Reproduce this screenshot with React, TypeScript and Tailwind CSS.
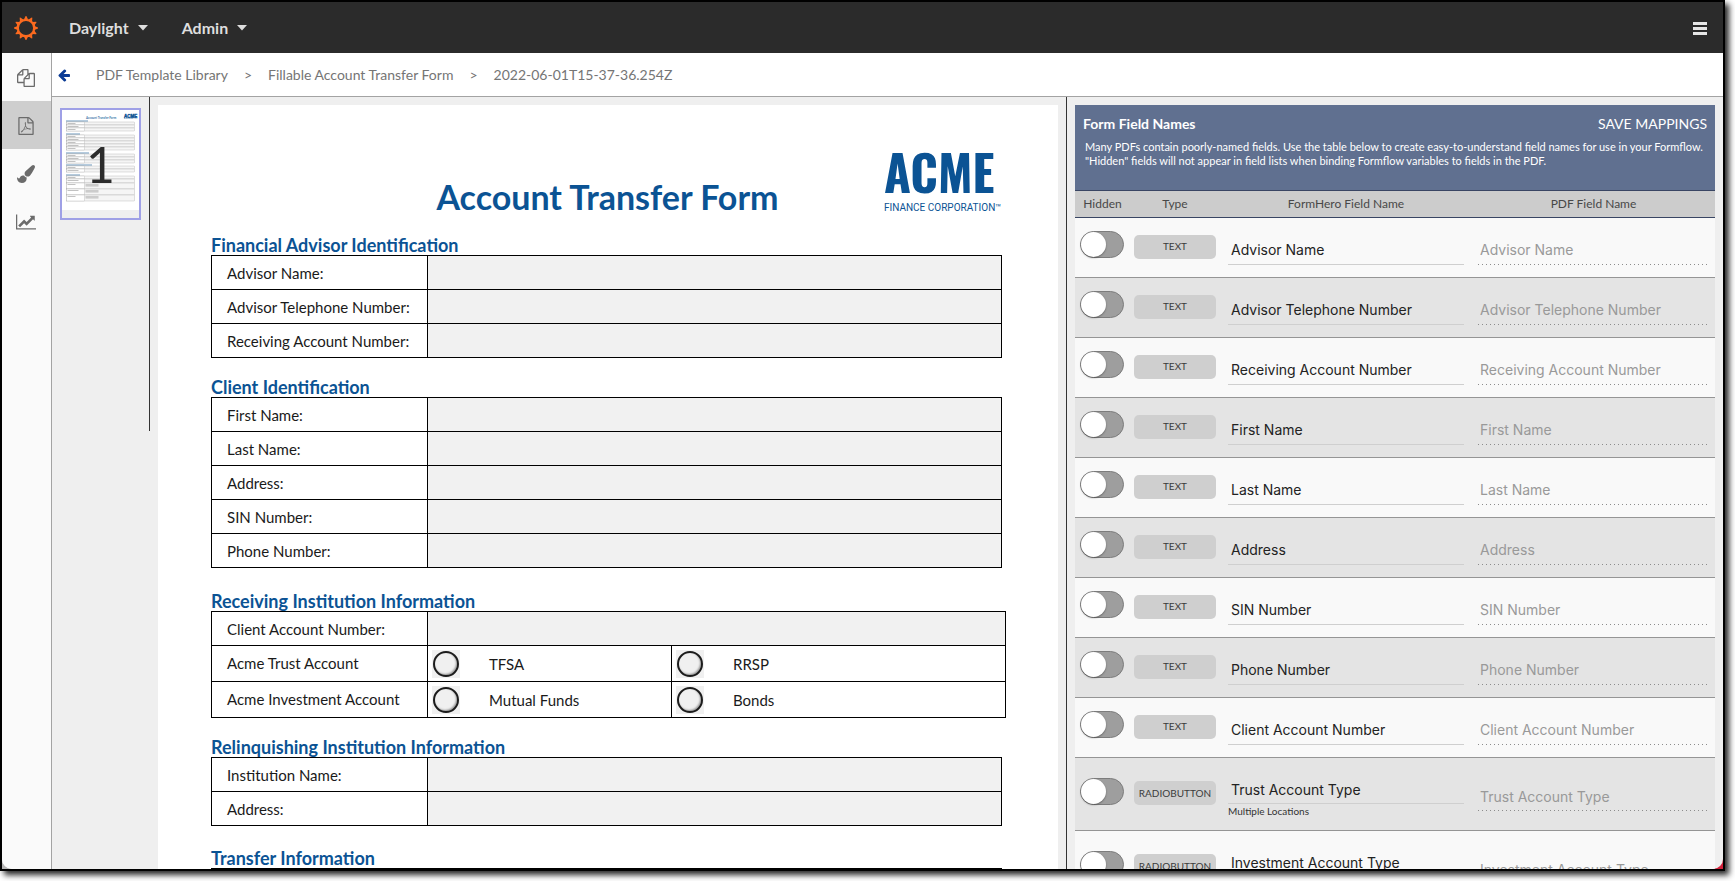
import { useState } from 'react';
import type { ReactNode } from 'react';

function Glyph({ d, viewBox = '0 0 1792 1792', className }: { d: string; viewBox?: string; className: string }) {
  return (
    <svg viewBox={viewBox} className={className} fill="currentColor" aria-hidden="true">
      <path d={d} />
    </svg>
  );
}

const FILES =
  'M1696 384q40 0 68 28t28 68v1216q0 40-28 68t-68 28h-960q-40 0-68-28t-28-68v-288h-544q-40 0-68-28t-28-68v-672q0-40 20-88t48-76l408-408q28-28 76-48t88-20h416q40 0 68 28t28 68v328q68-40 128-40h416zm-544 213l-299 299h299v-299zm-640-384l-299 299h299v-299zm196 647l316-316v-416h-384v416q0 40-28 68t-68 28h-416v640h512v-256q0-40 20-88t48-76zm956 804v-1152h-384v416q0 40-28 68t-68 28h-416v640h896z';
const PDF =
  'M1596 380q28 28 48 76t20 88v1152q0 40-28 68t-68 28h-1344q-40 0-68-28t-28-68v-1600q0-40 28-68t68-28h896q40 0 88 20t76 48zm-444-244v376h376q-10-29-22-41l-313-313q-12-12-41-22zm384 1528v-1024h-416q-40 0-68-28t-28-68v-416h-768v1536h1280zm-514-593q33 26 84 56 59-7 117-7 147 0 177 49 16 22 2 52 0 1-1 2l-2 2v1q-6 38-71 38-48 0-115-20t-130-53q-221 24-392 83-153 262-242 262-15 0-28-7l-24-12q-1-1-6-5-10-10-6-36 9-40 56-91.5t132-96.5q14-9 23 6 2 2 2 4 52-85 107-197 68-136 104-262-24-82-30.5-159.5t6.5-127.5q11-40 42-40h22q23 0 35 15 18 21 9 68-2 6-4 8 1 3 1 8v30q-2 123-14 192 55 164 146 238zm-576 411q52-24 137-158-51 40-87.5 84t-49.5 74zm398-920q-15 42-2 132 1-7 7-44 0-3 7-43 1-4 4-8-1-1-1-2-1-2-1-3-1-22-13-36 0 1-1 2v2zm-124 661q135-54 284-81-2-1-13-9.5t-16-13.5q-76-67-127-176-27 86-83 197-30 56-45 83zm646-16q-24-24-140-24 76 28 124 28 14 0 18-1 0-1-2-3z';
const BRUSH =
  'M1615 0q70 0 122.5 46.5t52.5 116.5q0 63-45 151-332 629-465 752-97 91-218 91-126 0-216.5-92.5t-90.5-219.5q0-128 92-212l638-579q59-54 130-54zm-909 1034q39 76 106.5 130t150.5 76l1 71q4 213-129.5 347t-348.5 134q-123 0-218-46.5t-152.5-127.5-86.5-183-29-220q7 5 41 30t62 44.5 59 36.5 46 17q41 0 55-37 25-66 57.5-112.5t69.5-76 88-47.5 103-25.5 125-10.5z';
const CHART =
  'M2048 1536v128h-2048v-1536h128v1408h1920zm-128-1248v435q0 21-19.5 29.5t-35.5-7.5l-121-121-633 633q-10 10-23 10t-23-10l-233-233-416 416-192-192 585-585q10-10 23-10t23 10l233 233 464-464-121-121q-16-16-7.5-35.5t29.5-19.5h435q14 0 23 9t9 23z';
const ARROW =
  'M1664 896v128q0 53-32.5 90.5t-84.5 37.5h-704l293 294q38 36 38 90t-38 90l-75 76q-37 37-90 37-52 0-91-37l-651-652q-37-37-37-90 0-52 37-91l651-650q38-38 91-38 52 0 90 38l75 74q38 38 38 91t-38 91l-293 293h704q52 0 84.5 37.5t32.5 90.5z';

function Sun() {
  const rays = Array.from({ length: 12 }, (_, i) => i * 30);
  return (
    <svg viewBox="0 0 24 24" className="size-6" aria-label="Home">
      <circle cx="12" cy="12" r="8.2" fill="none" stroke="#fb6a1f" strokeWidth="2.3" />
      {rays.map((a) => (
        <path key={a} d="M9.9 3.6 11.6 0h.8l1.7 3.6z" fill="#fb6a1f" transform={`rotate(${a} 12 12)`} />
      ))}
    </svg>
  );
}

function NavMenu({ label }: { label: string }) {
  return (
    <button className="flex items-center gap-[9px] text-[16px] leading-6 font-bold text-[#dedede]">
      {label}
      <svg viewBox="0 0 10 6" className="h-[6px] w-[10px]" fill="currentColor" aria-hidden="true">
        <path d="M0 0h10L5 5.5z" />
      </svg>
    </button>
  );
}

const tools = [
  { name: 'Forms', d: FILES, box: '0 0 1792 1792', size: 'size-[18px]' },
  { name: 'PDF templates', d: PDF, box: '0 0 1792 1792', size: 'size-[18px]' },
  { name: 'Themes', d: BRUSH, box: '0 0 1792 1792', size: 'size-[18px]' },
  { name: 'Reports', d: CHART, box: '0 0 2048 1792', size: 'h-[18px] w-5' },
];

function Sidebar() {
  return (
    <nav className="w-[50px] shrink-0 border-r border-[#a3a3a3] bg-[#fafafa]">
      {tools.map((t, i) => (
        <button
          key={t.name}
          aria-label={t.name}
          className={
            i === 1
              ? 'flex h-12 w-full items-center justify-center bg-[#cecece] pt-[2px] pr-[2px] text-[#6b6b6b]'
              : 'flex h-12 w-full items-center justify-center pt-[2px] pr-[2px] text-[#6b6b6b]'
          }
        >
          <Glyph d={t.d} viewBox={t.box} className={t.size} />
        </button>
      ))}
    </nav>
  );
}

function Thumbnail() {
  const groups = [
    { y: 11, rows: [3, 3, 3], w: 22 },
    { y: 24, rows: [3, 3, 3, 3, 3], w: 14 },
    { y: 43, rows: [3, 3, 3], w: 23 },
    { y: 55, rows: [3, 3], w: 26 },
    { y: 65, rows: [3, 4, 6, 6, 6], w: 14 },
  ];
  return (
    <button className="relative flex h-[112px] w-full items-start border-2 border-[#9fa0e6] bg-[#efefef]" aria-label="Page 1">
      <svg viewBox="0 0 77 100" className="block w-full bg-white" aria-hidden="true">
        <text x="24" y="9" fontSize="3" fontWeight="bold" fill="#3d76aa" fontFamily="Lato, sans-serif">
          Account Transfer Form
        </text>
        <text x="62" y="7.5" fontSize="4.5" fontWeight="bold" fill="#0b5394" stroke="#0b5394" strokeWidth="0.4" fontFamily="'Liberation Sans Narrow', sans-serif">
          ACME
        </text>
        <rect x="62" y="8.5" width="9" height="0.5" fill="#0b5394" opacity="0.5" />
        {groups.map((g) => {
          let y = g.y + 1;
          return (
            <g key={g.y}>
              <rect x="4" y={g.y - 0.6} width={g.w} height="1.2" fill="#0b5394" opacity="0.5" />
              {g.rows.map((h, i) => {
                const top = y;
                y += h;
                return (
                  <g key={i}>
                    <rect x="4.5" y={top} width="68" height={h} fill="#f5f5f5" stroke="#999" strokeWidth="0.3" />
                    <rect x="4.5" y={top} width="18" height={h} fill="#fff" stroke="#999" strokeWidth="0.3" />
                    <rect x="5.5" y={top + 1.2} width={8 + ((i * 3) % 6)} height="0.6" fill="#999" />
                    {h === 6 && <rect x="23.5" y={top + 1} width="13" height="2.6" fill="#ccc" />}
                  </g>
                );
              })}
            </g>
          );
        })}
      </svg>
      <span className="absolute inset-0 flex items-center justify-center text-[50px] leading-none text-[#2c2c2c]">1</span>
    </button>
  );
}

function Section({ title, children, gap }: { title: string; children: ReactNode; gap: string }) {
  return (
    <section className={gap}>
      <h2 className="pt-1 text-[18px] leading-5 font-bold text-[#0b5394]">{title}</h2>
      {children}
    </section>
  );
}

const labelCell = 'h-[34px] w-[216px] border border-black pl-[15px] text-left font-normal';

function FieldTable({ id, fields }: { id: string; fields: string[] }) {
  return (
    <div className="pr-1">
      <table className="w-full table-fixed border-collapse text-[15px] leading-5 text-[#1a1a1a]">
        <tbody>
          {fields.map((f) => (
            <tr key={f}>
              <th className={labelCell}>
                <label htmlFor={id + f}>{f}</label>
              </th>
              <td className="border border-black bg-[#f1f1f1] p-0">
                <input id={id + f} className="block h-[33px] w-full bg-transparent px-2 outline-none" />
              </td>
            </tr>
          ))}
        </tbody>
      </table>
    </div>
  );
}

function Radio({ name, label }: { name: string; label: string }) {
  return (
    <label className="flex items-center gap-[29px] pl-1">
      <span className="flex size-7 items-center justify-center bg-[#f0f0f0]">
        <input
          type="radio"
          name={name}
          className="size-[26px] appearance-none rounded-full border-2 border-[#1c1c1c] bg-[#f0f0f0] shadow-[inset_-1px_-1px_2px_#999]"
        />
      </span>
      {label}
    </label>
  );
}

function PdfPage() {
  return (
    <article className="h-full overflow-hidden bg-white pr-[52px] pl-[53px] text-[#1a1a1a]">
      <header className="flex h-[126px] items-start justify-between pr-1">
        <span className="w-[120px]" />
        <h1 className="pt-[72px] text-[34px] leading-10 font-bold text-[#0b5394]">Account Transfer Form</h1>
        <div className="w-[118px] pt-[39px] text-[#0b5394]">
          <div className="font-['Liberation_Sans_Narrow',Oswald,'Liberation_Sans',sans-serif] text-[49px] leading-[54px] font-bold">
            ACME
          </div>
          <div className="pt-[2px] font-[Roboto,sans-serif] text-[10px] leading-4 whitespace-nowrap">FINANCE CORPORATION™</div>
        </div>
      </header>
      <Section title="Financial Advisor Identification" gap="">
        <FieldTable id="advisor" fields={['Advisor Name:', 'Advisor Telephone Number:', 'Receiving Account Number:']} />
      </Section>
      <Section title="Client Identification" gap="mt-[15px]">
        <FieldTable id="client" fields={['First Name:', 'Last Name:', 'Address:', 'SIN Number:', 'Phone Number:']} />
      </Section>
      <Section title="Receiving Institution Information" gap="mt-[19px]">
        <table className="w-full table-fixed border-collapse text-[15px] leading-5">
          <colgroup>
            <col className="w-[216px]" />
            <col className="w-[244px]" />
            <col />
          </colgroup>
          <tbody>
            <tr>
              <th className={labelCell}>
                <label htmlFor="clientAccount">Client Account Number:</label>
              </th>
              <td colSpan={2} className="border border-black bg-[#f1f1f1] p-0">
                <input id="clientAccount" className="block h-[33px] w-full bg-transparent px-2 outline-none" />
              </td>
            </tr>
            {[
              ['Acme Trust Account', 'TFSA', 'RRSP'],
              ['Acme Investment Account', 'Mutual Funds', 'Bonds'],
            ].map(([head, a, b]) => (
              <tr key={head}>
                <th className="h-9 border border-black pb-[2px] pl-[15px] text-left font-normal">{head}</th>
                <td className="border border-black p-0 pt-px">
                  <Radio name={head} label={a} />
                </td>
                <td className="border border-black p-0 pt-px">
                  <Radio name={head} label={b} />
                </td>
              </tr>
            ))}
          </tbody>
        </table>
      </Section>
      <Section title="Relinquishing Institution Information" gap="mt-[15px]">
        <FieldTable id="relinquishing" fields={['Institution Name:', 'Address:']} />
      </Section>
      <Section title="Transfer Information" gap="mt-[18px]">
        <FieldTable id="transfer" fields={['']} />
      </Section>
    </article>
  );
}

type Field = { name: string; type: string; note?: string };

const fields: Field[] = [
  { name: 'Advisor Name', type: 'TEXT' },
  { name: 'Advisor Telephone Number', type: 'TEXT' },
  { name: 'Receiving Account Number', type: 'TEXT' },
  { name: 'First Name', type: 'TEXT' },
  { name: 'Last Name', type: 'TEXT' },
  { name: 'Address', type: 'TEXT' },
  { name: 'SIN Number', type: 'TEXT' },
  { name: 'Phone Number', type: 'TEXT' },
  { name: 'Client Account Number', type: 'TEXT' },
  { name: 'Trust Account Type', type: 'RADIOBUTTON', note: 'Multiple Locations' },
  { name: 'Investment Account Type', type: 'RADIOBUTTON', note: 'Multiple Locations' },
];

function Toggle({ label }: { label: string }) {
  return (
    <label className="block pb-[6px] pl-[5px]">
      <input type="checkbox" aria-label={label} className="peer sr-only" />
      <span className="flex h-[27px] w-11 items-center rounded-full border border-[#7c7c7c] bg-[#9e9e9e] peer-checked:justify-end peer-checked:bg-[#5f7090]">
        <span className="size-[25px] rounded-full bg-white shadow-[0_1px_2px_rgba(0,0,0,0.35)]" />
      </span>
    </label>
  );
}

function FieldRow({ field }: { field: Field }) {
  const [name, setName] = useState(field.name);
  return (
    <tr
      className={
        field.note
          ? 'h-[73px] border-b border-[#959595] odd:bg-[#f9f9f9] even:bg-[#e4e4e4]'
          : 'h-[60px] border-b border-[#959595] odd:bg-[#f9f9f9] even:bg-[#e4e4e4]'
      }
    >
      <td className="p-0">
        <Toggle label={'Hide ' + field.name} />
      </td>
      <td className="p-0 pb-[2px] pl-1">
        <span className="flex h-6 w-[82px] items-center justify-center rounded-[5px] bg-[#cfcfcf] text-[10px] text-[#3c3c3c]">
          {field.type}
        </span>
      </td>
      <td className="px-2 py-0">
        <input
          aria-label="FormHero Field Name"
          value={name}
          onChange={(e) => setName(e.target.value)}
          className="block h-[34px] w-full border-b border-[#cfcfcf] bg-transparent pt-[5px] pl-[3px] font-[Inter,sans-serif] text-[14px] text-[#222] outline-none"
        />
        {field.note && <div className="text-[10px] leading-[14px] text-[#333]">{field.note}</div>}
      </td>
      <td className="py-0 pr-2 pl-[6px]">
        <input
          aria-label="PDF Field Name"
          readOnly
          value={field.name}
          className="block h-[34px] w-full bg-[repeating-linear-gradient(90deg,#8c8c8c_0_1px,transparent_1px_4px)] bg-[length:100%_1px] bg-bottom bg-no-repeat pt-1 pl-[2px] font-[Inter,sans-serif] text-[14px] text-[#999] outline-none"
        />
      </td>
    </tr>
  );
}

function MappingPanel() {
  return (
    <section className="h-full overflow-hidden">
      <header className="h-[85px] bg-[#607090] px-2 pt-[9px] text-white">
        <div className="flex items-center justify-between leading-5">
          <h2 className="text-[14px] font-bold">Form Field Names</h2>
          <button className="text-[14px]">SAVE MAPPINGS</button>
        </div>
        <p className="pt-[6px] pl-[2px] text-[11px] leading-[14px]">
          Many PDFs contain poorly-named fields. Use the table below to create easy-to-understand field names for use in your Formflow.
          <br />
          "Hidden" fields will not appear in field lists when binding Formflow variables to fields in the PDF.
        </p>
      </header>
      <table className="w-full table-fixed border-collapse">
        <colgroup>
          <col className="w-[55px]" />
          <col className="w-[90px]" />
          <col className="w-[252px]" />
          <col />
        </colgroup>
        <thead>
          <tr className="h-[27px] border-y border-[#394563] bg-[#cccccc] text-[12px] text-[#484848]">
            <th className="p-0 pb-px font-normal">Hidden</th>
            <th className="p-0 pb-px font-normal">Type</th>
            <th className="p-0 pb-px font-normal">FormHero Field Name</th>
            <th className="p-0 pb-px font-normal">PDF Field Name</th>
          </tr>
        </thead>
        <tbody>
          {fields.map((f) => (
            <FieldRow key={f.name} field={f} />
          ))}
        </tbody>
      </table>
    </section>
  );
}

export default function App() {
  return (
    <div className="h-screen overflow-hidden bg-white pr-[10px] pb-[10px] font-[Lato,sans-serif]">
      <div className="h-full border-2 border-black bg-linear-to-r from-[#b5b5b5] to-[#d0203a] shadow-[4px_4px_6px_rgba(0,0,0,0.85)]">
        <div className="flex h-full flex-col overflow-hidden rounded-b-[10px] bg-[#efefef]">
          <header className="flex h-[51px] shrink-0 items-center bg-[#2b2b2b] pr-4 pl-3">
            <Sun />
            <div className="flex gap-[34px] pl-[31px]">
              <NavMenu label="Daylight" />
              <NavMenu label="Admin" />
            </div>
            <button aria-label="Menu" className="ml-auto flex w-[14px] flex-col gap-[2px] pt-[2px]">
              <span className="h-[3px] bg-[#e6e6e6]" />
              <span className="h-[3px] bg-[#e6e6e6]" />
              <span className="h-[3px] bg-[#e6e6e6]" />
            </button>
          </header>
          <div className="flex min-h-0 flex-1">
            <Sidebar />
            <div className="flex min-w-0 flex-1 flex-col">
              <nav className="flex h-11 shrink-0 items-center border-b border-[#a3a3a3] bg-white pl-[5px] text-[14px] text-[#757575]">
                <button aria-label="Back" className="text-[#0a3a94]">
                  <Glyph d={ARROW} className="size-[14px]" />
                </button>
                <div className="flex gap-4 pl-[25px]">
                  <a href="#library">PDF Template Library</a>
                  <span>&gt;</span>
                  <a href="#form">Fillable Account Transfer Form</a>
                  <span>&gt;</span>
                  <a href="#version">2022-06-01T15-37-36.254Z</a>
                </div>
              </nav>
              <div className="flex min-h-0 flex-1">
                <aside className="h-[334px] w-[98px] shrink-0 border-r border-[#333] pt-[11px] pr-2 pl-2">
                  <Thumbnail />
                </aside>
                <main className="min-w-0 flex-1 px-2 pt-2">
                  <PdfPage />
                </main>
                <aside className="w-[657px] shrink-0 border-l border-[#333] px-2 pt-2">
                  <MappingPanel />
                </aside>
              </div>
            </div>
          </div>
        </div>
      </div>
    </div>
  );
}
